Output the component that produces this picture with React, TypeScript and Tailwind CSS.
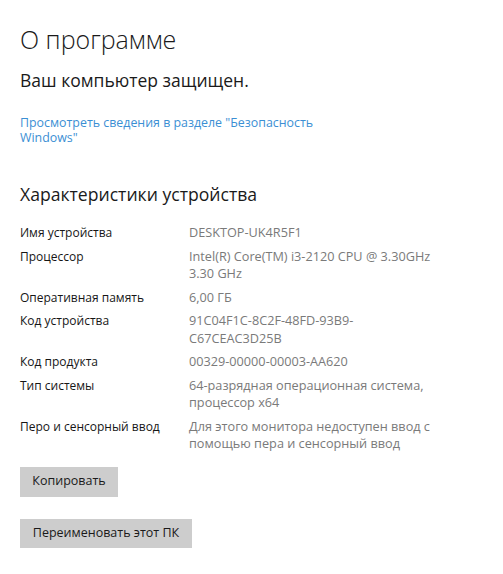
import React from "react";

const rows: { label: string; value: string[] }[] = [
  { label: "Имя устройства", value: ["DESKTOP-UK4R5F1"] },
  { label: "Процессор", value: ["Intel(R) Core(TM) i3-2120 CPU @ 3.30GHz", "3.30 GHz"] },
  { label: "Оперативная память", value: ["6,00 ГБ"] },
  { label: "Код устройства", value: ["91C04F1C-8C2F-48FD-93B9-", "C67CEAC3D25B"] },
  { label: "Код продукта", value: ["00329-00000-00003-AA620"] },
  { label: "Тип системы", value: ["64-разрядная операционная система,", "процессор x64"] },
  { label: "Перо и сенсорный ввод", value: ["Для этого монитора недоступен ввод с", "помощью пера и сенсорный ввод"] },
];

export default function App() {
  return (
    <div
      className="w-[503px] h-[574px] bg-white pl-[20px] pt-[22px] overflow-hidden"
      style={{ fontFamily: '"Open Sans", "Noto Sans", sans-serif' }}
    >
      <h1 className="text-[25px] leading-[34px] font-light text-[#1a1a1a]">О программе</h1>
      <div className="mt-[12px] text-[17.5px] leading-[24px] text-[#1a1a1a]">Ваш компьютер защищен.</div>
      <div className="mt-[23px] w-[310px] text-[12.4px] leading-[15px] text-[#3b8fd4]">
        Просмотреть сведения в разделе "Безопасность Windows"
      </div>
      <h2 className="mt-[37px] text-[17.6px] leading-[24px] text-[#1a1a1a]">Характеристики устройства</h2>
      <div className="mt-[18px] flex flex-col gap-[6px] text-[12px] leading-[17.5px]">
        {rows.map((r) => (
          <div key={r.label} className="flex">
            <div className="w-[169px] shrink-0 text-[#161616]">{r.label}</div>
            <div className="text-[12.7px] text-[#7a7a7a]">
              {r.value.map((v) => (
                <div key={v}>{v}</div>
              ))}
            </div>
          </div>
        ))}
      </div>
      <div className="mt-[14px] flex flex-col items-start gap-[22px]">
        <button className="h-[30px] w-[98px] bg-[#cdcdcd] text-[12.5px] text-[#1a1a1a]">Копировать</button>
        <button className="h-[29px] w-[172px] bg-[#cdcdcd] text-[12.5px] text-[#1a1a1a]">Переименовать этот ПК</button>
      </div>
    </div>
  );
}
